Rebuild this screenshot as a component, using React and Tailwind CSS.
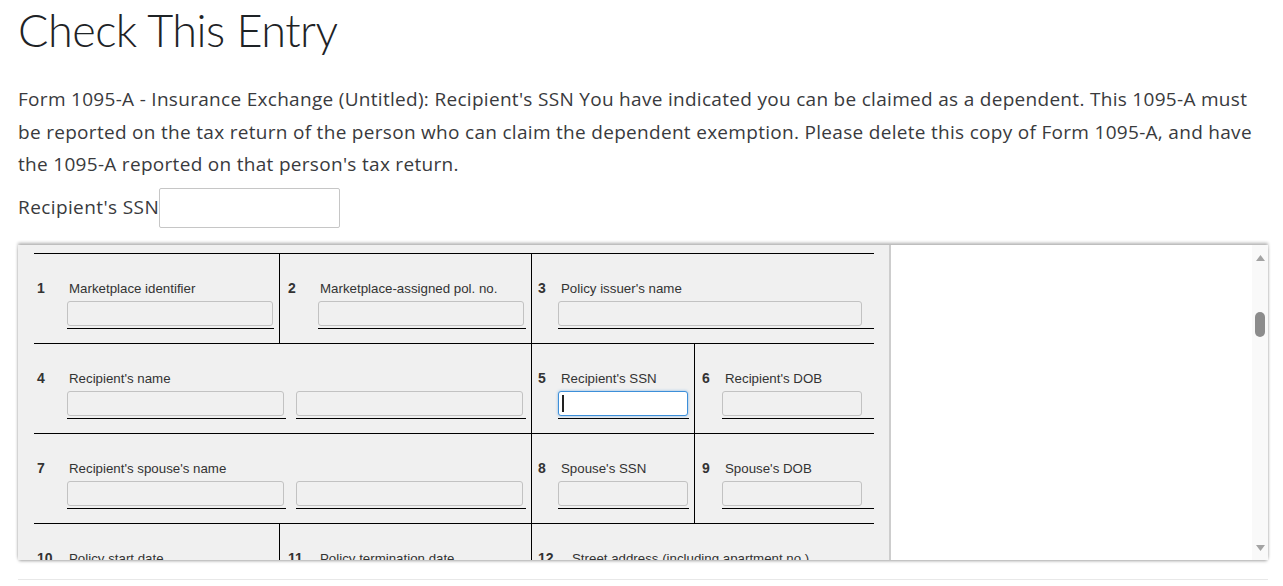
const label = "text-[13.3px] text-[#333] whitespace-nowrap";

function Cell({ num, text, numClass, className = "", children }) {
  return (
    <div className={`flex flex-col pt-[27px] ${className}`}>
      <div className={`flex items-center h-4 ${label}`}>
        <span className={`font-bold text-[14px] ${numClass}`}>{num}</span>
        <span>{text}</span>
      </div>
      <div className="flex mt-[4px]">{children}</div>
    </div>
  );
}

function Box({ className, boxClass, focused }) {
  return (
    <div className={`border-b border-black pb-[2px] ${className}`}>
      {focused ? (
        <div
          className={`h-[25px] rounded-[3px] border border-[#3d8fd9] bg-white shadow-[0_0_3px_rgba(61,143,217,0.6)] flex items-center pl-[3px] ${boxClass}`}
        >
          <span className="w-[2px] h-[17px] bg-[#222]" />
        </div>
      ) : (
        <input
          readOnly
          className={`block h-[25px] rounded-[3px] border border-[#c2c2c2] bg-[#f0f0f0] outline-none ${boxClass}`}
        />
      )}
    </div>
  );
}

function Row({ children }) {
  return <div className="flex h-[90px] border-t border-black">{children}</div>;
}

function Form1095A() {
  return (
    <div className="w-[840px] ml-[16px] mt-[8px] font-['Liberation_Sans',Arial,sans-serif]">
      <Row>
        <Cell num="1" text="Marketplace identifier" numClass="ml-[3px] w-[32px]" className="w-[245px]">
          <Box className="ml-[33px] w-[207px]" boxClass="w-[206px]" />
        </Cell>
        <Cell num="2" text="Marketplace-assigned pol. no." numClass="ml-[8px] w-[32px]" className="w-[252px] border-l border-black">
          <Box className="ml-[38px] w-[208px]" boxClass="w-[206px]" />
        </Cell>
        <Cell num="3" text="Policy issuer's name" numClass="ml-[6px] w-[23px]" className="flex-1 border-l border-black">
          <Box className="ml-[26px] w-[316px]" boxClass="w-[304px]" />
        </Cell>
      </Row>
      <Row>
        <Cell num="4" text="Recipient's name" numClass="ml-[3px] w-[32px]" className="w-[497px]">
          <Box className="ml-[33px] w-[219px]" boxClass="w-[217px]" />
          <Box className="ml-[10px] w-[230px]" boxClass="w-[227px]" />
        </Cell>
        <Cell num="5" text="Recipient's SSN" numClass="ml-[6px] w-[23px]" className="w-[163px] border-l border-black">
          <Box className="ml-[26px] w-[131px]" boxClass="w-[130px]" focused />
        </Cell>
        <Cell num="6" text="Recipient's DOB" numClass="ml-[7px] w-[23px]" className="flex-1 border-l border-black">
          <Box className="ml-[27px] w-[152px]" boxClass="w-[140px]" />
        </Cell>
      </Row>
      <Row>
        <Cell num="7" text="Recipient's spouse's name" numClass="ml-[3px] w-[32px]" className="w-[497px]">
          <Box className="ml-[33px] w-[219px]" boxClass="w-[217px]" />
          <Box className="ml-[10px] w-[230px]" boxClass="w-[227px]" />
        </Cell>
        <Cell num="8" text="Spouse's SSN" numClass="ml-[6px] w-[23px]" className="w-[163px] border-l border-black">
          <Box className="ml-[26px] w-[131px]" boxClass="w-[130px]" />
        </Cell>
        <Cell num="9" text="Spouse's DOB" numClass="ml-[7px] w-[23px]" className="flex-1 border-l border-black">
          <Box className="ml-[27px] w-[152px]" boxClass="w-[140px]" />
        </Cell>
      </Row>
      <Row>
        <Cell num="10" text="Policy start date" numClass="ml-[3px] w-[32px]" className="w-[245px]">
          <Box className="ml-[33px] w-[207px]" boxClass="w-[206px]" />
        </Cell>
        <Cell num="11" text="Policy termination date" numClass="ml-[8px] w-[32px]" className="w-[252px] border-l border-black">
          <Box className="ml-[38px] w-[208px]" boxClass="w-[206px]" />
        </Cell>
        <Cell num="12" text="Street address (including apartment no.)" numClass="ml-[6px] w-[34px]" className="flex-1 border-l border-black">
          <Box className="ml-[26px] w-[316px]" boxClass="w-[304px]" />
        </Cell>
      </Row>
    </div>
  );
}

function Scrollbar() {
  return (
    <div className="w-[16px] bg-[#f9f9f9] flex flex-col items-center">
      <svg className="mt-[10px]" width="9" height="6" viewBox="0 0 9 6">
        <path d="M4.5 0L9 6H0z" fill="#a3a3a3" />
      </svg>
      <div className="mt-[51px] w-[10px] h-[25px] rounded-full bg-[#8c8c8c]" />
      <div className="flex-1" />
      <svg className="mb-[9px]" width="9" height="6" viewBox="0 0 9 6">
        <path d="M0 0H9L4.5 6z" fill="#a3a3a3" />
      </svg>
    </div>
  );
}

export default function App() {
  return (
    <div className="min-h-screen bg-white pl-[18px] pr-[15px] font-['Open_Sans','Noto_Sans',sans-serif] text-[#393a3d]">
      <h1 className="pt-[2px] font-['Lato',sans-serif] text-[45px] font-light tracking-[-0.5px] leading-[56px] text-[#1e2326]">
        Check This Entry
      </h1>
      <p className="mt-[25px] text-[19px] tracking-[0.3px] leading-[32.5px]">
        Form 1095-A - Insurance Exchange (Untitled): Recipient's SSN You have indicated you can be claimed as a
        dependent. This 1095-A must be reported on the tax return of the person who can claim the dependent
        exemption. Please delete this copy of Form 1095-A, and have the 1095-A reported on that person's tax return.
      </p>
      <div className="mt-[7px] flex items-center text-[19px] tracking-[0.4px]">
        <span>Recipient's SSN</span>
        <input readOnly className="w-[181px] h-[40px] rounded-[2px] border border-[#c6c6c6] bg-white outline-none" />
      </div>
      <div className="mt-[17px] h-[315px] overflow-hidden flex bg-white shadow-[0_-2px_3px_0_rgba(0,0,0,0.3),0_2px_3px_-1px_rgba(0,0,0,0.35)]">
        <div className="w-[873px] bg-[#f0f0f0] border-r-2 border-[#cdcdcd]">
          <Form1095A />
        </div>
        <div className="flex-1" />
        <Scrollbar />
      </div>
      <div className="mt-[19px] border-t border-[#e8e8e8]" />
    </div>
  );
}
